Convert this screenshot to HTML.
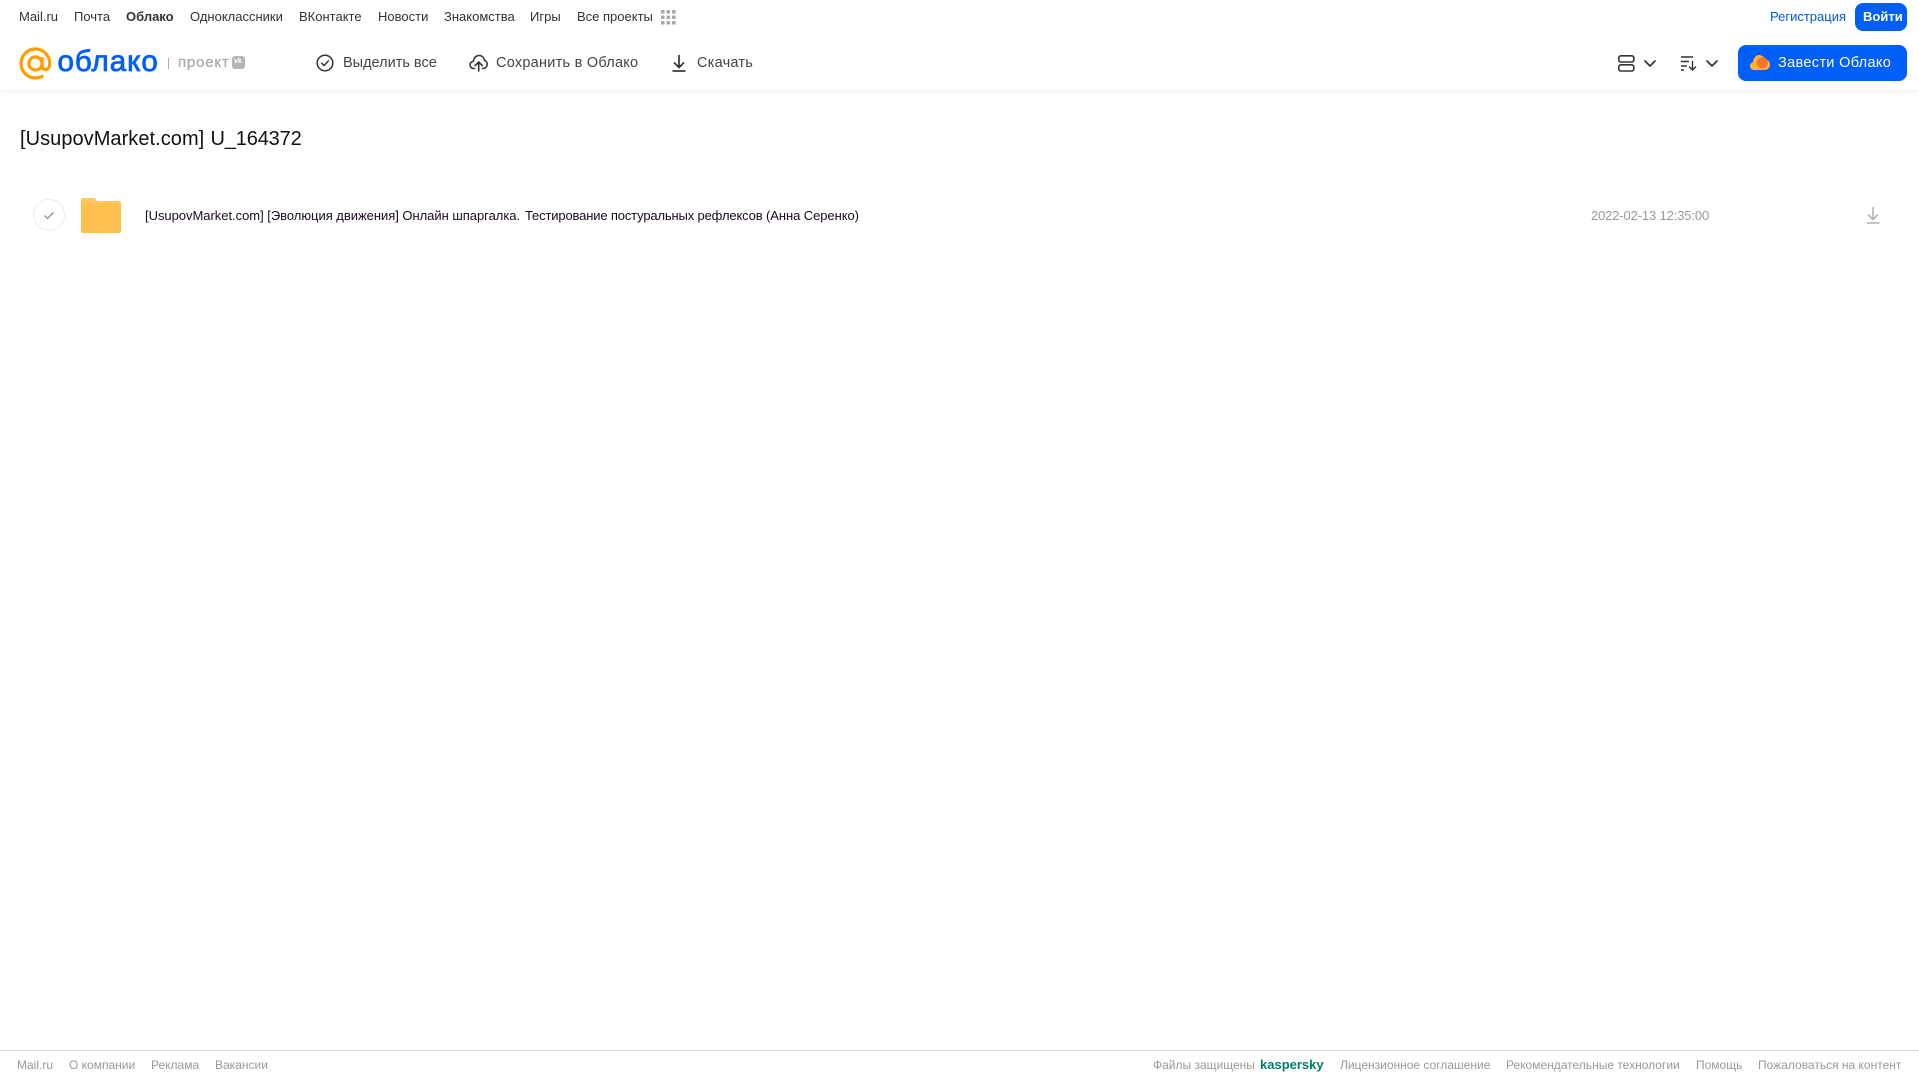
<!DOCTYPE html>
<html lang="ru">
<head>
<meta charset="utf-8">
<title>Облако</title>
<style>
html,body{margin:0;padding:0;background:#fff;}
body{width:1919px;height:1079px;position:relative;overflow:hidden;font-family:"Liberation Sans",sans-serif;}
.t{position:absolute;white-space:nowrap;line-height:20px;height:20px;}
.n{top:7px;font-size:13px;color:#333;}
.b{top:53px;font-size:14.5px;color:#444;}
.f{top:1055px;font-size:12px;color:#999;}
.r{top:206px;font-size:13px;color:#1a0a1e;}
.h{top:127px;height:24px;line-height:24px;font-size:20px;color:#111;}
svg{position:absolute;overflow:visible;}
#hdr{position:absolute;left:0;top:0;width:1919px;height:90px;background:#fff;box-shadow:0 1px 7px rgba(0,0,0,.08);}
#line{position:absolute;left:0;top:1050px;width:1919px;height:1px;background:#d9d9d9;}
.btn{position:absolute;background:#005ff9;border-radius:8px;}
</style>
</head>
<body>
<div id="hdr"></div>

<span class="t n" style="left:19px">Mail.ru</span>
<span class="t n" style="left:74px">Почта</span>
<span class="t n" style="left:126px;font-weight:bold">Облако</span>
<span class="t n" style="left:190px">Одноклассники</span>
<span class="t n" style="left:299px">ВКонтакте</span>
<span class="t n" style="left:378px">Новости</span>
<span class="t n" style="left:444px">Знакомства</span>
<span class="t n" style="left:530px">Игры</span>
<span class="t n" style="left:577px">Все проекты</span>
<svg style="left:661px;top:10px" width="15" height="15" fill="#a8a8a8"><rect x="0" y="0" width="3.6" height="3.6" rx="1"/><rect x="5.5" y="0" width="3.6" height="3.6" rx="1"/><rect x="11" y="0" width="3.6" height="3.6" rx="1"/><rect x="0" y="5.5" width="3.6" height="3.6" rx="1"/><rect x="5.5" y="5.5" width="3.6" height="3.6" rx="1"/><rect x="11" y="5.5" width="3.6" height="3.6" rx="1"/><rect x="0" y="11" width="3.6" height="3.6" rx="1"/><rect x="5.5" y="11" width="3.6" height="3.6" rx="1"/><rect x="11" y="11" width="3.6" height="3.6" rx="1"/></svg>

<span class="t n" style="left:1770px;color:#005bd1">Регистрация</span>
<div class="btn" style="left:1855px;top:3px;width:52px;height:28px"></div>
<span class="t" style="left:1863px;top:7px;font-size:13px;font-weight:bold;color:#fff">Войти</span>

<svg style="left:19px;top:47px" width="33" height="33" viewBox="0 0 33 33" fill="none" stroke="#ff9e00" stroke-width="3.2"><circle cx="16.5" cy="16.5" r="6.6"/><path d="M23.1 10.2v8.6c0 5.6 7.6 5.2 7.6-2.3C30.700 8.600 24.400 2 16.500 2 8.500 2 2 8.500 2 16.500S8.500 31 16.500 31c3 0 5.600-.8 7.900-2.300"/></svg>
<span class="t" style="left:57.500px;top:45px;height:34px;line-height:34px;font-size:29.5px;color:#005ff9;-webkit-text-stroke:.8px #005ff9;letter-spacing:1px">облако</span>
<div style="position:absolute;left:168px;top:58px;width:1px;height:11px;background:#aaa"></div>
<span class="t" style="left:178px;top:53px;font-size:15px;color:#aaa;-webkit-text-stroke:.3px #aaa;letter-spacing:.8px">проект</span>
<div style="position:absolute;left:232px;top:56px;width:13px;height:13px;background:#b5b5b5;border-radius:3px"></div>
<span class="t" style="left:234px;top:52px;font-size:7px;font-weight:bold;color:#fff">vk</span>

<svg style="left:316px;top:54px" width="18" height="18" viewBox="0 0 18 18" fill="none" stroke="#333" stroke-width="1.5"><circle cx="9" cy="9" r="7.8"/><path d="M5.700 9.200l2.400 2.400 4.300-4.700" stroke-linecap="round" stroke-linejoin="round"/></svg>
<span class="t b" style="left:343px">Выделить все</span>

<svg style="left:469px;top:54px" width="19" height="18" viewBox="0 0 19 18" fill="none" stroke="#333" stroke-width="1.6" stroke-linecap="round" stroke-linejoin="round"><path d="M5.500 14.500H4.700C2.700 14.500 1 13 1 11c0-1.900 1.400-3.400 3.200-3.600C4.700 4 7 1.500 10 1.500c3 0 5 2.100 5.500 4.900 1.500.4 2.700 1.900 2.700 3.800 0 2.400-1.800 4.300-4 4.300h-.7"/><path d="M9.700 17V8.500M6.200 11.500l3.500-3.500 3.500 3.500"/></svg>
<span class="t b" style="left:496px;letter-spacing:.25px">Сохранить в Облако</span>

<svg style="left:671px;top:54px" width="16" height="18" viewBox="0 0 16 18" fill="none" stroke="#333" stroke-width="1.7"><path d="M8 1v12M3 8.500l5 5 5-5"/><path d="M1.500 17h13"/></svg>
<span class="t b" style="left:697px;letter-spacing:.23px">Скачать</span>

<svg style="left:1618px;top:55px" width="17" height="17" viewBox="0 0 17 17" fill="none" stroke="#333" stroke-width="1.6"><rect x=".8" y=".8" width="15" height="6.200" rx="2"/><rect x=".8" y="9.800" width="15" height="6.200" rx="2"/></svg>
<svg style="left:1644px;top:60px" width="12" height="7" viewBox="0 0 12 7" fill="none" stroke="#333" stroke-width="1.7" stroke-linecap="round" stroke-linejoin="round"><path d="M1 1l5 5 5-5"/></svg>
<svg style="left:1681px;top:56px" width="16" height="15" viewBox="0 0 16 15" fill="none" stroke="#333" stroke-width="1.4"><path d="M0 1h12M0 5.500h8M0 10h6M0 14h3"/><path d="M11.500 5v9M8 10.500l3.500 3.500 3.500-3.500"/></svg>
<svg style="left:1706px;top:60px" width="12" height="7" viewBox="0 0 12 7" fill="none" stroke="#333" stroke-width="1.7" stroke-linecap="round" stroke-linejoin="round"><path d="M1 1l5 5 5-5"/></svg>

<div class="btn" style="left:1738px;top:45px;width:169px;height:36px"></div>
<svg style="left:1750px;top:54px" width="20" height="16" viewBox="0 0 20 16"><path d="M4 16C1.800 16 0 14.300 0 12c0-2 1.300-3.500 3-3.900C3.500 4.500 5.500 1 9 1c3 0 5 1.800 6 4.200 2.700.2 5 2.500 5 5.400 0 3-2.400 5.400-5.400 5.400z" fill="#ffb13d"/><circle cx="12.300" cy="8.800" r="5.600" fill="#f5762a"/></svg>
<span class="t" style="left:1778px;top:53px;font-size:14.5px;color:#fff;letter-spacing:.33px">Завести Облако</span>

<span class="t h" style="left:20px;letter-spacing:.05px">[UsupovMarket.com]</span>
<span class="t h" style="left:210.500px;letter-spacing:-.15px">U_164372</span>

<svg style="left:33px;top:199px" width="32" height="32" viewBox="0 0 32 32" fill="none"><circle cx="16" cy="16" r="15.500" stroke="#ececec"/><path d="M11.500 16.500l3 3 6-6" stroke="#999" stroke-width="1.500"/></svg>
<svg style="left:81px;top:198px" width="40" height="35" viewBox="0 0 40 35"><path d="M2 0h10c2 0 3 1 4 3h22c1.200 0 2 .8 2 2v28c0 1.200-.8 2-2 2H2c-1.200 0-2-.8-2-2V2C0 .8.800 0 2 0z" fill="#ffc760"/><path d="M0 5.500h38c1.200 0 2 .5 2 1.500v26c0 1.200-.8 2-2 2H2c-1.200 0-2-.8-2-2z" fill="#ffc04f"/></svg>
<span class="t r" style="left:145px;letter-spacing:-.03px">[UsupovMarket.com] [Эволюция движения] Онлайн шпаргалка.</span>
<span class="t r" style="left:525px;letter-spacing:-.155px">Тестирование постуральных рефлексов</span>
<span class="t r" style="left:766px;letter-spacing:-.07px">(Анна Серенко)</span>
<span class="t" style="left:1591px;top:206px;font-size:13px;color:#999;letter-spacing:-.14px">2022-02-13 12:35:00</span>
<svg style="left:1866px;top:207px" width="14" height="17" viewBox="0 0 14 17" fill="none" stroke="#aaa" stroke-width="1.4"><path d="M7 0v12M2 7.500l5 5 5-5"/><path d="M.5 16h13"/></svg>

<div id="line"></div>
<span class="t f" style="left:17px">Mail.ru</span>
<span class="t f" style="left:69px">О компании</span>
<span class="t f" style="left:151px">Реклама</span>
<span class="t f" style="left:215px">Вакансии</span>
<span class="t f" style="left:1153px">Файлы защищены</span>
<span class="t f" style="left:1260px;font-size:13px;font-weight:bold;color:#00806a">kaspersky</span>
<span class="t f" style="left:1340px">Лицензионное соглашение</span>
<span class="t f" style="left:1506px">Рекомендательные технологии</span>
<span class="t f" style="left:1696px">Помощь</span>
<span class="t f" style="left:1758px">Пожаловаться на контент</span>
</body>
</html>
